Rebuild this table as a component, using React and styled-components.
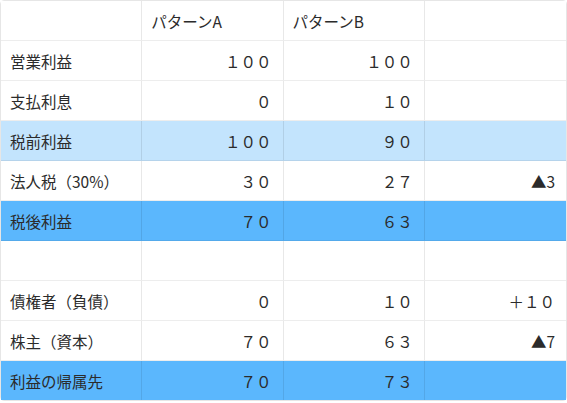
import React from "react";
import styled, { createGlobalStyle } from "styled-components";

const Global = createGlobalStyle`
  html, body {
    margin: 0;
    padding: 0;
    background: #ffffff;
  }
  body {
    font-family: "Noto Sans CJK JP", "Noto Sans", sans-serif;
    color: #2b2b2b;
  }
`;

const Table = styled.table`
  width: 567px;
  table-layout: fixed;
  border-collapse: separate;
  border-spacing: 0;
  border: 1px solid #e6e6e6;
  border-radius: 4px;
  font-size: 15.5px;
`;

const Row = styled.tr`
  background: ${(p) =>
    p.$tone === "strong" ? "#5bb7fd" : p.$tone === "light" ? "#c3e4fd" : "#ffffff"};

  &:last-child td {
    border-bottom: none;
  }
`;

const Cell = styled.td`
  height: 39px;
  padding: 0 11px 0 9px;
  text-align: ${(p) => (p.$num ? "right" : "left")};
  border-right: 1px solid rgba(0, 0, 0, 0.085);
  border-bottom: 1px solid rgba(0, 0, 0, 0.07);
  line-height: 20px;
  white-space: nowrap;

  &:last-child {
    border-right: none;
  }
`;

const rows = [
  { label: "", a: "パターンA", b: "パターンB", d: "", head: true },
  { label: "営業利益", a: "１００", b: "１００", d: "" },
  { label: "支払利息", a: "０", b: "１０", d: "" },
  { label: "税前利益", a: "１００", b: "９０", d: "", tone: "light" },
  { label: "法人税（30%）", a: "３０", b: "２７", d: "▲3" },
  { label: "税後利益", a: "７０", b: "６３", d: "", tone: "strong" },
  { label: "", a: "", b: "", d: "" },
  { label: "債権者（負債）", a: "０", b: "１０", d: "＋１０" },
  { label: "株主（資本）", a: "７０", b: "６３", d: "▲7" },
  { label: "利益の帰属先", a: "７０", b: "７３", d: "", tone: "strong" },
];

export default function App() {
  return (
    <>
      <Global />
      <Table>
        <tbody>
          {rows.map((r, i) => (
            <Row key={i} $tone={r.tone}>
              <Cell>{r.label}</Cell>
              <Cell $num={!r.head}>{r.a}</Cell>
              <Cell $num={!r.head}>{r.b}</Cell>
              <Cell $num>{r.d}</Cell>
            </Row>
          ))}
        </tbody>
      </Table>
    </>
  );
}
